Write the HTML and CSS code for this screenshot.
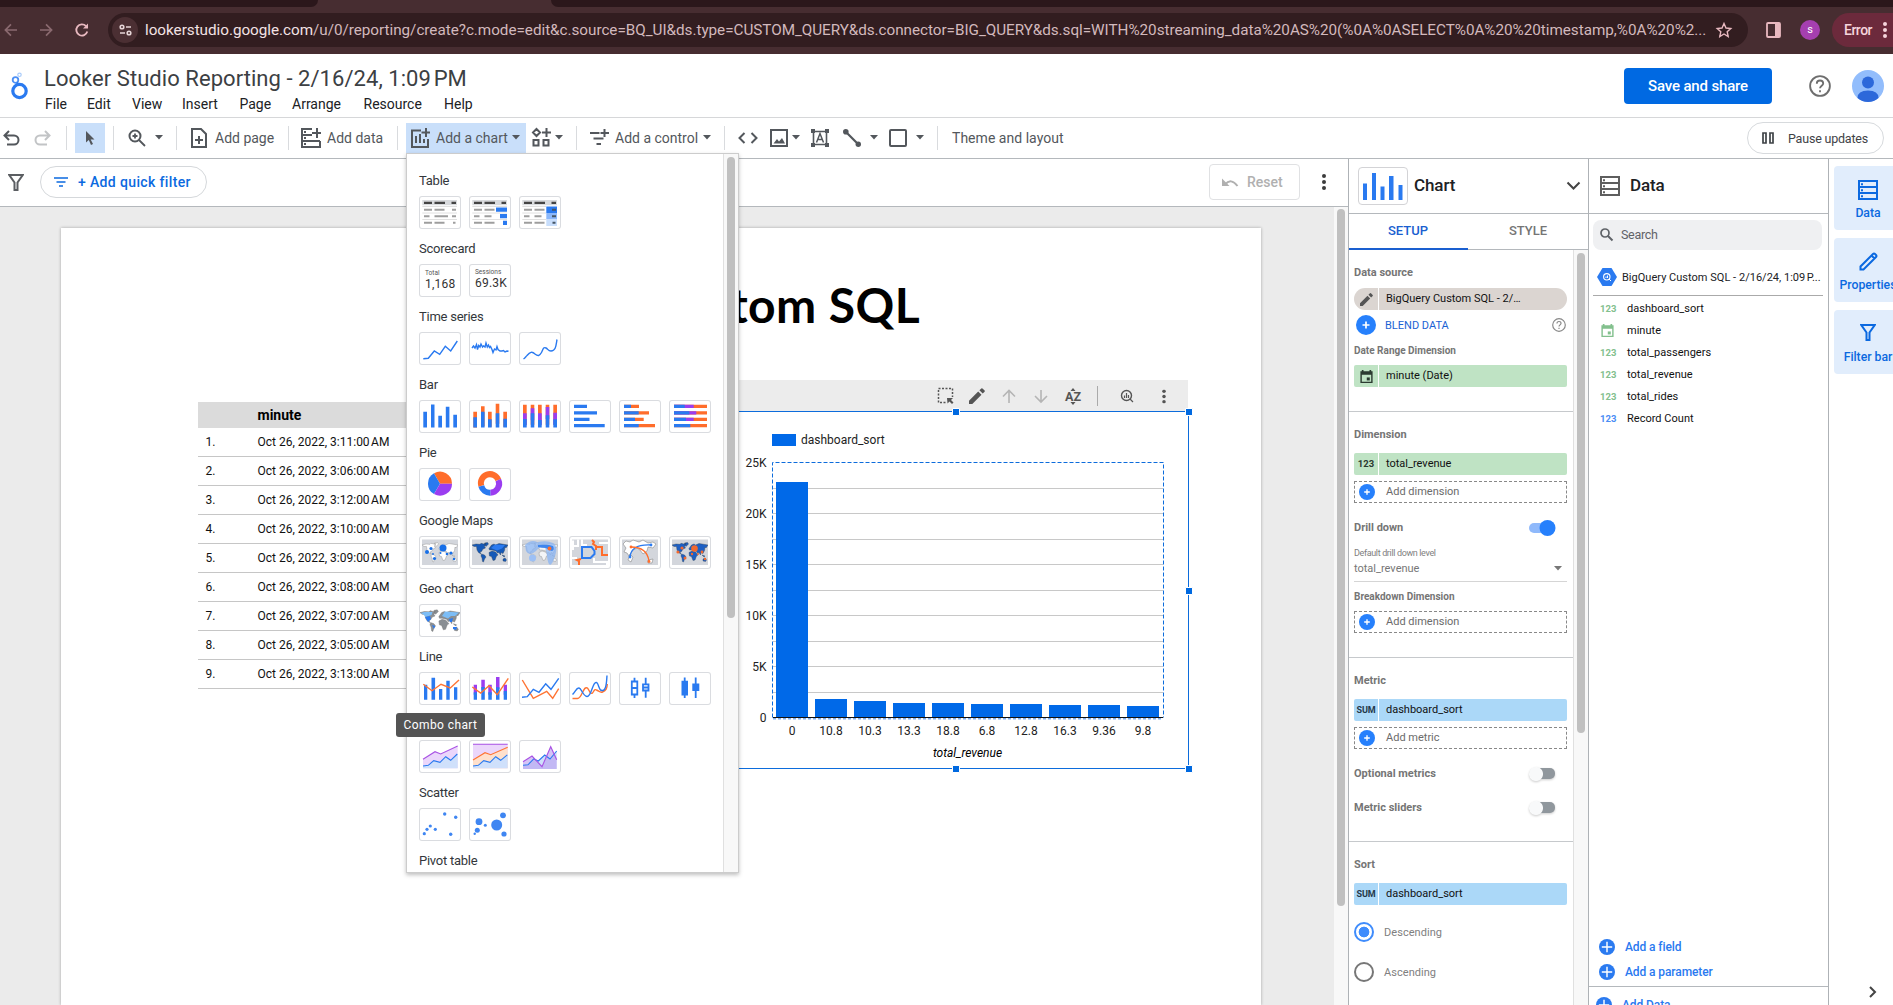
FILE: index.html
```html
<!DOCTYPE html>
<html lang="en">
<head>
<meta charset="utf-8">
<title>Looker Studio Reporting</title>
<link rel="stylesheet" href="styles.css">
</head>
<body>
<svg class="defs" aria-hidden="true">
  <symbol id="world" viewBox="0 0 36 25"><path d="M0 5.5 4 4.5 8 4.8 9 3.8 12 4.5 14 4 12.5 7 13.5 8.5 11 9.5 9.5 12 8 12.5 9 14.5 6.5 13 5 10.5 4.5 7 2 7zM12.5 3.5 15.5 3 16.5 4.5 14 7 13 6zM9.5 14.5 12.5 15.5 14 17.5 12.5 19.5 11.5 22.5 10.5 22 10 18.5 9 16.5zM17 13 20 11.5 23.500 12.500 26 15.5 24.500 16.500 23 20.500 21 21 19.500 17 17.500 16.500zM17.500 10.500 17 9 19.500 5.500 22 4.500 23.500 5.500 27 4 36 5.500 34 8.500 33 7.500 32.500 11 31 14 29 13 28.500 15.500 27 13 25.500 13.500 24 11.500 20 10.500zM30 15.500 33 16.500 32 17.500zM31 19.500 33 18.500 34.500 20.500 33.500 22 31 21.500z"/></symbol>
  <symbol id="plus" viewBox="0 0 20 20"><circle cx="10" cy="10" r="10"/><path d="M10 6.500v7M6.500 10h7" stroke="#fff" stroke-width="1.700"/></symbol>
  <symbol id="bigplus" viewBox="0 0 20 20"><circle cx="10" cy="10" r="10"/><path d="M10 3.500v13M3.500 10h13" stroke="#fff" stroke-width="1.800"/></symbol>
  <symbol id="cal" viewBox="0 0 16 16"><path d="M3 1h1.800v1.500h6.400V1H13v1.500h1.500V15h-13V2.500H3zM3 6v7.500h10V6z" fill-rule="evenodd"/><path d="M8.300 9h3.200v3.200H8.300z"/></symbol>
  <symbol id="pencil" viewBox="0 0 16 16"><path d="M0 12.700V16h3.300l9.200-9.200-3.300-3.300zM15.600 3.700 13.700 5.600 10.400 2.300 12.300.4q.6-.5 1.200 0l2.100 2.100q.5.600 0 1.200z"/></symbol>
  <symbol id="rows" viewBox="0 0 20 20"><path d="M1 1h18v18H1zM1 7h18M1 13h18" fill="none" stroke="currentColor" stroke-width="2"/><path d="M3 3.200h2v2H3zM3 9.200h2v2H3zM3 15.200h2v2H3z"/></symbol>
  <symbol id="caret" viewBox="0 0 8 5"><path d="M0 0h8L4 4.500z"/></symbol>
  <symbol id="help" viewBox="0 0 24 24"><circle cx="12" cy="12" r="10.800" fill="none" stroke="currentColor" stroke-width="2"/><path d="M8.500 9.500q0-3.500 3.500-3.500t3.500 3.200c0 2.300-3.500 2.800-3.500 5.300" fill="none" stroke="currentColor" stroke-width="2"/><path d="M11 16.500h2v2.200h-2z"/></symbol>
  <symbol id="arrow" viewBox="0 0 14 14"><path d="M14 7H1.500M7.500 1 1.500 7l6 6" fill="none" stroke="currentColor" stroke-width="1.800"/></symbol>
  <symbol id="dots" viewBox="0 0 4 16"><circle cx="2" cy="2" r="2"/><circle cx="2" cy="8" r="2"/><circle cx="2" cy="14" r="2"/></symbol>
  <symbol id="funnel" viewBox="0 0 16 17"><path d="M1.300 1h13.400L9.500 8.500V16h-3V8.500z" fill="none" stroke="currentColor" stroke-width="2"/></symbol>
</svg>

<header class="browser">
  <div class="strip"><i class="tab-l"></i><i class="tab-r"></i></div>
  <div class="nav">
    <svg class="nav-back" width="13" height="14"><use href="#arrow"/></svg>
    <svg class="nav-fwd" width="13" height="14"><use href="#arrow"/></svg>
    <svg class="nav-reload" width="14" height="14" viewBox="0 0 14 14"><path d="M12.300 8.500A5.600 5.600 0 1 1 11 3.100" fill="none" stroke="currentColor" stroke-width="1.800"/><path d="M13 .5v5H8z"/></svg>
    <div class="omni">
      <span class="site"><svg width="13" height="12" viewBox="0 0 13 12" fill="none" stroke="currentColor" stroke-width="1.600"><circle cx="3" cy="3" r="1.800"/><path d="M7 3h5M1 9h5"/><circle cx="10" cy="9" r="1.800"/></svg></span>
      <span class="url"><b>lookerstudio.google.com</b>/u/0/reporting/create?c.mode=edit&amp;c.source=BQ_UI&amp;ds.type=CUSTOM_QUERY&amp;ds.connector=BIG_QUERY&amp;ds.sql=WITH%20streaming_data%20AS%20(%0A%0ASELECT%0A%20%20timestamp,%0A%20%2...</span>
      <svg class="star" width="16" height="16" viewBox="0 0 16 16"><path d="M8 1.500 10 6l4.800.5-3.600 3.200 1 4.800L8 12l-4.200 2.500 1-4.800L1.200 6.500 6 6z" fill="none" stroke="currentColor" stroke-width="1.400"/></svg>
    </div>
    <svg class="side" width="15" height="16" viewBox="0 0 15 16"><rect x="1" y="1" width="13" height="14" rx="1" fill="none" stroke="#e9b9c0" stroke-width="1.800"/><path d="M9 1h5v14H9z" fill="#e9b9c0"/></svg>
    <span class="profile">s</span>
    <span class="error">Error<svg width="4" height="16"><use href="#dots"/></svg></span>
  </div>
</header>

<section class="head">
  <svg class="logo" width="18" height="27" viewBox="0 0 18 27" fill="none"><circle cx="8.500" cy="19" r="6.700" stroke="#2a7af0" stroke-width="3.200"/><circle cx="4.500" cy="8" r="2.800" stroke="#4d90f5" stroke-width="1.800"/><circle cx="8.500" cy="2.800" r="1.700" stroke="#a9cbfa" stroke-width="1.200"/><path d="M6 10.500 7.500 13" stroke="#2a7af0" stroke-width="2"/></svg>
  <div class="head-main">
    <h1>Looker Studio Reporting - 2/16/24, 1:09&#8239;PM</h1>
    <nav class="menu"><span>File</span><span>Edit</span><span>View</span><span>Insert</span><span>Page</span><span>Arrange</span><span>Resource</span><span>Help</span></nav>
  </div>
  <button class="save">Save and share</button>
  <svg class="head-help" width="22" height="22"><use href="#help"/></svg>
  <svg class="avatar" width="32" height="32" viewBox="0 0 32 32"><circle cx="16" cy="16" r="16" fill="#92bdfc"/><circle cx="16" cy="12.500" r="6" fill="#2c68da"/><path d="M5.500 28q0-7.500 10.500-7.500T26.500 28a16 16 0 0 1-21 0z" fill="#2c68da"/></svg>
</section>

<section class="tools">
  <div class="seg s1">
    <svg width="17" height="16" viewBox="0 0 17 16"><path d="M1.500 5.500H11a4.500 4.500 0 0 1 0 9H4M6 1 1.500 5.500 6 10" fill="none" stroke="currentColor" stroke-width="2"/></svg>
    <svg class="off" width="17" height="16" viewBox="0 0 17 16"><path d="M15.500 5.500H6a4.500 4.500 0 0 0 0 9h7M11 1l4.500 4.500L11 10" fill="none" stroke="currentColor" stroke-width="2"/></svg>
  </div>
  <div class="seg s2"><span class="sel"><svg width="10" height="14" viewBox="0 0 10 14"><path d="M1 0v11.500l2.800-2.400L6 14l2-1-2.300-4.600H9.500z"/></svg></span></div>
  <div class="seg s3"><svg width="18" height="18" viewBox="0 0 18 18"><circle cx="7" cy="7" r="5.500" fill="none" stroke="currentColor" stroke-width="2"/><path d="m11 11 6 6M7 4.500v5M4.500 7h5" stroke="currentColor" stroke-width="1.800"/></svg><svg class="car" width="8" height="5"><use href="#caret"/></svg></div>
  <div class="seg s4"><svg width="16" height="20" viewBox="0 0 16 20" fill="none" stroke="currentColor" stroke-width="2"><path d="M1 1h9l5 5v13H1zM8 8v8M4 12h8"/></svg><span>Add page</span></div>
  <div class="seg s5"><svg width="20" height="20" viewBox="0 0 20 20"><path d="M11 1H1v18h18v-6M1 7h10M1 13h18M19 13v6" fill="none" stroke="currentColor" stroke-width="2"/><path d="M16 0v10M11 5h9" stroke="currentColor" stroke-width="2"/><path d="M3 3h2v2H3zM3 9h2v2H3zM3 15h2v2H3z"/></svg><span>Add data</span></div>
  <div class="seg s6"><span class="active"><svg width="19" height="20" viewBox="0 0 19 20" fill="none" stroke="currentColor" stroke-width="2"><path d="M10 2.500H1V19h16v-8M5 15V8M9 15V6M13 15v-4M15 0v9M10.500 4.500H19"/></svg><span>Add a chart</span><svg class="car" width="8" height="5"><use href="#caret"/></svg></span><svg class="shapes" width="19" height="19" viewBox="0 0 19 19" fill="none" stroke="currentColor" stroke-width="2"><path d="M4.500 1 8 4.500 4.500 8 1 4.500zM1.500 12h5v5.500h-5zM11.500 12h5v5.500h-5zM14.500 0v9M10 4.500h9"/></svg><svg class="car2" width="8" height="5"><use href="#caret"/></svg></div>
  <div class="seg s7"><svg width="19" height="17" viewBox="0 0 19 17" fill="none" stroke="currentColor" stroke-width="2"><path d="M0 4h9.500M3.500 9.500h10M6.500 15h4.500M14.500 0v8M10.500 4H19"/></svg><span>Add a control</span><svg class="car" width="8" height="5"><use href="#caret"/></svg></div>
  <div class="seg s8">
    <svg class="t-code" width="20" height="12" viewBox="0 0 20 12" fill="none" stroke="currentColor" stroke-width="2"><path d="M6.500 1 1.500 6l5 5M13.500 1l5 5-5 5"/></svg>
    <svg class="t-img" width="18" height="18" viewBox="0 0 18 18"><path d="M1 1h16v16H1z" fill="none" stroke="currentColor" stroke-width="2"/><path d="M3.500 14.500 7 10l2 2.500L12 9l3 5.500z"/></svg><svg class="t-c1" width="8" height="5"><use href="#caret"/></svg>
    <svg class="t-txt" width="18" height="18" viewBox="0 0 18 18"><path d="M2.500 2.500h13v13h-13z" fill="none" stroke="currentColor" stroke-width="1.600"/><path d="M0 0h4v4H0zM14 0h4v4h-4zM0 14h4v4H0zM14 14h4v4h-4z"/><path d="m5.500 13.500 3.500-9 3.500 9M7 10.500h4" fill="none" stroke="currentColor" stroke-width="1.500"/></svg>
    <svg class="t-line" width="18" height="18" viewBox="0 0 18 18"><circle cx="2.800" cy="2.800" r="2.800"/><circle cx="15.300" cy="15.300" r="2.700"/><path d="m3 3 12 12" stroke="currentColor" stroke-width="2.200"/></svg><svg class="t-c2" width="8" height="5"><use href="#caret"/></svg>
    <svg class="t-rect" width="18" height="18" viewBox="0 0 18 18"><rect x="1" y="1" width="16" height="16" rx="1" fill="none" stroke="currentColor" stroke-width="2"/></svg><svg class="t-c2" width="8" height="5"><use href="#caret"/></svg>
  </div>
  <span class="theme">Theme and layout</span>
  <span class="pause"><svg width="12" height="12" viewBox="0 0 12 12" fill="none" stroke="currentColor" stroke-width="1.700"><path d="M1 1h3v10H1zM8 1h3v10H8z"/></svg>Pause updates</span>
</section>

<main class="work">
  <section class="left">
    <div class="filters">
      <svg class="f-fun" width="16" height="17"><use href="#funnel"/></svg>
      <span class="quick"><svg width="14" height="10" viewBox="0 0 14 10"><path d="M0 1h14M2.500 5h9M5 9h4" stroke="currentColor" stroke-width="1.700"/></svg>+ Add quick filter</span>
      <span class="reset"><svg width="17" height="9" viewBox="0 0 17 9"><path d="M3 6.500Q9-.5 15.500 8" fill="none" stroke="currentColor" stroke-width="2"/><path d="M0 .5V8h7.500z"/></svg>Reset</span>
      <svg class="f-dots" width="4" height="16"><use href="#dots"/></svg>
    </div>
    <div class="canvas">
      <article class="page">
        <h2 class="report-title">Custom SQL</h2>
        <table class="data">
          <tr><th></th><th>minute</th></tr>
          <tr><td>1.</td><td>Oct 26, 2022, 3:11:00&#8239;AM</td></tr>
          <tr><td>2.</td><td>Oct 26, 2022, 3:06:00&#8239;AM</td></tr>
          <tr><td>3.</td><td>Oct 26, 2022, 3:12:00&#8239;AM</td></tr>
          <tr><td>4.</td><td>Oct 26, 2022, 3:10:00&#8239;AM</td></tr>
          <tr><td>5.</td><td>Oct 26, 2022, 3:09:00&#8239;AM</td></tr>
          <tr><td>6.</td><td>Oct 26, 2022, 3:08:00&#8239;AM</td></tr>
          <tr><td>7.</td><td>Oct 26, 2022, 3:07:00&#8239;AM</td></tr>
          <tr><td>8.</td><td>Oct 26, 2022, 3:05:00&#8239;AM</td></tr>
          <tr><td>9.</td><td>Oct 26, 2022, 3:13:00&#8239;AM</td></tr>
        </table>
        <div class="chart">
          <svg width="500" height="400" viewBox="700 376 500 400">
            <path d="M700 380h488v31H700z" fill="#ececec"/>
            <g fill="#555">
              <path d="M938.500 388.500h14v14h-14z" fill="none" stroke="#555" stroke-width="1.500" stroke-dasharray="2 1.500"/><path d="M946 397h8v7h-8z" fill="#ececec"/><path d="M947 398h6l-2 2 2.500 2.500-1.500 1.500-2.500-2.500-2 2z"/>
              <use href="#pencil" x="969" y="388" width="16" height="16"/>
              <path d="M1009 403v-12M1003 396.500l6-6 6 6M1041 390v12M1035 396l6 6 6-6" fill="none" stroke="#b5b5b5" stroke-width="1.600"/>
              <text class="az" x="1073" y="401" text-anchor="middle">AZ</text><path d="m1070.500 391 2.500-3 2.500 3zM1070.500 402l2.500 3 2.500-3z"/>
              <path d="M1097 386h1v20h-1z" fill="#aaa"/>
              <circle cx="1126.500" cy="395.500" r="5" fill="none" stroke="#555" stroke-width="1.400"/><path d="m1130 399 3 3M1124.500 398v-2.500M1126.500 398v-5M1128.500 398v-3" stroke="#555" stroke-width="1.200"/>
              <use href="#dots" x="1162" y="389.500" width="4" height="14"/>
            </g>
            <path d="M772 434h24v12h-24z" fill="#0069e8"/>
            <text x="801" y="444.300" class="leg">dashboard_sort</text>
            <path d="M773 488.500h390M773 513.500h390M773 539.500h390M773 564.500h390M773 590.500h390M773 615.500h390M773 641.500h390M773 666.500h390M773 692.500h390" stroke="#c8c8c8"/>
            <path d="M772.500 717.500v-255h391v255" fill="none" stroke="#0c6cdc" stroke-dasharray="4 2"/>
            <path d="M776 482h32v235h-32zM815 699h32v18h-32zM854 701h32v16h-32zM893 703h32v14h-32zM932 703h32v14h-32zM971 704h32v13h-32zM1010 704h32v13h-32zM1049 705h32v12h-32zM1088 705h32v12h-32zM1127 706h32v11h-32z" fill="#0069e8"/>
            <path d="M773 718.500h390" stroke="#7faef0" stroke-width="2" stroke-dasharray="3 2"/><path d="M773 717.500h390" stroke="#111"/>
            <g text-anchor="end"><text x="766.500" y="467">25K</text><text x="766.500" y="518">20K</text><text x="766.500" y="569">15K</text><text x="766.500" y="620">10K</text><text x="766.500" y="671">5K</text><text x="766.500" y="722">0</text></g>
            <g text-anchor="middle"><text x="792" y="735">0</text><text x="831" y="735">10.8</text><text x="870" y="735">10.3</text><text x="909" y="735">13.3</text><text x="948" y="735">18.8</text><text x="987" y="735">6.8</text><text x="1026" y="735">12.8</text><text x="1065" y="735">16.3</text><text x="1104" y="735">9.36</text><text x="1143" y="735">9.8</text><text x="967.500" y="757" font-style="italic">total_revenue</text></g>
            <path d="M700 411.500h488.500v357H700" fill="none" stroke="#0c6cdc"/>
            <path d="M952.500 408.500h7v7h-7zM1185.500 408.500h7v7h-7zM1185.500 587.500h7v7h-7zM1185.500 765.500h7v7h-7zM952.500 765.500h7v7h-7z" fill="#0069e0" stroke="#fff"/>
          </svg>
        </div>
      </article>
      <div class="bar canvas-bar"><i></i></div>
    </div>
  </section>

  <aside class="setup">
    <div class="setup-head">
      <span class="chart-ic"><svg width="50" height="38" viewBox="0 0 50 38"><path d="M5 16.500h4V33H5zM14 6h4v27h-4zM22.500 19.500h4V33h-4zM31 9h4.500v24H31zM40.500 18h4v15h-4z" fill="#2a7af0"/></svg></span>
      <span class="pt">Chart</span>
      <svg class="chev" width="15" height="10" viewBox="0 0 15 10"><path d="m1.500 1.500 6 6 6-6" fill="none" stroke="#444" stroke-width="2"/></svg>
    </div>
    <div class="tabs"><span class="on">SETUP</span><span>STYLE</span></div>
    <div class="setup-body">
      <div class="form">
        <div class="grp g1">
          <h4>Data source</h4>
          <div class="chip src"><i><svg width="13" height="13"><use href="#pencil"/></svg></i><span>BigQuery Custom SQL - 2/…</span></div>
          <div class="blend"><svg width="20" height="20"><use href="#plus"/></svg><span>BLEND DATA</span><svg class="bh" width="14" height="14"><use href="#help"/></svg></div>
          <h4 class="minor">Date Range Dimension</h4>
          <div class="chip green"><i><svg width="15" height="15"><use href="#cal"/></svg></i><span>minute (Date)</span></div>
        </div>
        <div class="grp g2">
          <h4>Dimension</h4>
          <div class="chip green"><i>123</i><span>total_revenue</span></div>
          <div class="add"><svg width="16" height="16"><use href="#plus"/></svg>Add dimension</div>
          <div class="row drill"><h4>Drill down</h4><svg width="28" height="18" viewBox="0 0 28 18"><rect x="1" y="4" width="22" height="10" rx="5" fill="#8fb9fb"/><circle cx="19.500" cy="9" r="8" fill="#2680fc"/></svg></div>
          <small>Default drill down level</small>
          <div class="select">total_revenue<svg width="8" height="5"><use href="#caret"/></svg></div>
          <h4 class="brk minor">Breakdown Dimension</h4>
          <div class="add"><svg width="16" height="16"><use href="#plus"/></svg>Add dimension</div>
        </div>
        <div class="grp g3">
          <h4>Metric</h4>
          <div class="chip blue"><i>SUM</i><span>dashboard_sort</span></div>
          <div class="add"><svg width="16" height="16"><use href="#plus"/></svg>Add metric</div>
          <div class="row opt"><h4>Optional metrics</h4><i class="tog"></i></div>
          <div class="row opt"><h4>Metric sliders</h4><i class="tog"></i></div>
        </div>
        <div class="grp g4">
          <h4>Sort</h4>
          <div class="chip blue"><i>SUM</i><span>dashboard_sort</span></div>
          <div class="radio on"><i></i>Descending</div>
          <div class="radio"><i></i>Ascending</div>
        </div>
      </div>
      <div class="bar setup-bar"><i></i></div>
    </div>
  </aside>

  <aside class="fields">
    <div class="fields-head"><svg width="20" height="20"><use href="#rows"/></svg><span class="pt">Data</span></div>
    <div class="search"><svg width="13" height="13" viewBox="0 0 13 13"><circle cx="5" cy="5" r="4" fill="none" stroke="currentColor" stroke-width="1.700"/><path d="m8 8 4.500 4.500" stroke="currentColor" stroke-width="1.900"/></svg>Search</div>
    <div class="source"><svg width="20" height="18" viewBox="0 0 20 18"><path d="M5.500 0h9L20 9l-5.500 9h-9L0 9z" fill="#2a7af0"/><circle cx="9.800" cy="8.800" r="3.200" fill="none" stroke="#fff" stroke-width="1.100"/><path d="m12 11 2 2M9 10V8.500M10.500 10V7.500" stroke="#fff"/></svg><span>BigQuery Custom SQL - 2/16/24, 1:09&#8239;P...</span></div>
    <ul>
      <li><i>123</i>dashboard_sort</li>
      <li><i><svg width="15" height="15"><use href="#cal"/></svg></i>minute</li>
      <li><i>123</i>total_passengers</li>
      <li><i>123</i>total_revenue</li>
      <li><i>123</i>total_rides</li>
      <li class="b"><i>123</i>Record Count</li>
    </ul>
    <div class="adds"><p><svg width="16" height="16"><use href="#bigplus"/></svg>Add a field</p><p><svg width="16" height="16"><use href="#bigplus"/></svg>Add a parameter</p></div>
    <div class="add-data"><svg width="16" height="16"><use href="#bigplus"/></svg>Add Data</div>
  </aside>

  <aside class="rail">
    <span><svg width="20" height="20"><use href="#rows"/></svg>Data</span>
    <span><svg width="19" height="19" viewBox="0 0 19 19"><path d="M1.500 17.500v-3L14 2q1-1 2 0l1 1q1 1 0 2L4.500 17.500zM12.500 3.500l3 3" fill="none" stroke="currentColor" stroke-width="2"/></svg>Properties</span>
    <span><svg width="16" height="17"><use href="#funnel"/></svg>Filter bar</span>
    <svg class="collapse" width="8" height="12" viewBox="0 0 8 12"><path d="m1 1 5 5-5 5" fill="none" stroke="#444" stroke-width="2"/></svg>
  </aside>
</main>

<div class="picker">
  <div class="list">
    <h5>Table</h5>
    <div class="cards">
      <svg viewBox="0 0 42 33"><path d="M3.300 4H38v5.300H3.300z" fill="#d8dadd"/><path d="M5 6.800h8M15.500 6.800H26M32.500 6.800H37" stroke="#444" stroke-width="2.200"/><path d="M3.300 10.500H38M3.300 17H38M3.300 23.500H38" stroke="#e0e0e0"/><path d="M5 13.800h8M15.500 13.800h10M33 13.800h4M5 20.200h5.500M15.500 20.200H29M33 20.200h4M5 26.700h8M15.500 26.700h10M34 26.700h2.500" stroke="#9e9e9e" stroke-width="1.900"/></svg>
      <svg viewBox="0 0 42 33"><path d="M3.300 4H38v5.300H3.300z" fill="#d8dadd"/><path d="M5 6.800h8M15.500 6.800H26M32.500 6.800H37" stroke="#444" stroke-width="2.200"/><path d="M3.300 10.500H38M3.300 17H38M3.300 23.500H38" stroke="#e0e0e0"/><path d="M5 13.800h8M15.500 13.800h10M5 20.200h5.500M15.500 20.200h7M5 26.700h8M15.500 26.700h10" stroke="#9e9e9e" stroke-width="1.900"/><path d="M27 11.500h11v4.300H27zM31 18h7v4.300h-7zM34 24.700h4V29h-4z" fill="#2a7af0"/></svg>
      <svg viewBox="0 0 42 33"><path d="M3.300 4H38v5.300H3.300z" fill="#d8dadd"/><path d="M5 6.800h8M15.500 6.800H26M32.500 6.800H37" stroke="#444" stroke-width="2.200"/><path d="M3.300 10.500H27M3.300 17H27M3.300 23.500H27" stroke="#e0e0e0"/><path d="M5 13.800h8M15.500 13.800h10M5 20.200h5.500M15.500 20.200h7M5 26.700h8M15.500 26.700h10" stroke="#9e9e9e" stroke-width="1.900"/><path d="M27.300 10.500H38V17H27.300z" fill="#2a7af0"/><path d="M27.300 17H38v6.500H27.300z" fill="#8cb8fa"/><path d="M27.300 23.500H38V30H27.300z" fill="#c8defc"/><path d="M33 13.800h4M33 20.200h4M33.500 26.700h3" stroke="#456" stroke-width="1.900"/></svg>
    </div>
    <h5>Scorecard</h5>
    <div class="cards">
      <div class="score">Total<b>1,168</b></div><div class="score s2nd">Sessions<b>69.3K</b></div>
    </div>
    <h5>Time series</h5>
    <div class="cards ln">
      <svg viewBox="0 0 42 33"><path d="m4.300 26.700 5-.4 6-7.300 5.400 3.300 5.600-8 5.400 4.700L38.300 9"/></svg>
      <svg viewBox="0 0 42 33"><path d="m3 16 1.500-2 1.500 2 1.500-3.500 1 5 1.200-4 1.300 1.500L12 12l1.500 3 1-1 1.500 1 1-4 1.300 4 1.200-2 1 2.500 1-1 1.500 3 1 3 1.500-3.500 1.500 1 1-3.500 1 3 2 1.500 2 0 1.500-.5 1.500 1.500 2-1 1.500.3"/></svg>
      <svg viewBox="0 0 42 33"><path d="M4.500 27C6 26 6.500 25 8 23.500c3-3.500 5-4.500 8-1.500 3 2.500 4.500 2 6.500-1.500 1.500-2.500 1.500-6 4.500-4.500 2 1 2 3 5 3 5 0 5-6 6-11.500"/></svg>
    </div>
    <h5>Bar</h5>
    <div class="cards">
      <svg viewBox="0 0 42 33"><path d="M4.300 11.700H8v15.800H4.300zM12 4.500h3.500v23H12zM19.300 15.800H23v11.700h-3.700zM26.800 6.800h3.600v20.700h-3.600zM34.300 14.800H38v12.700h-3.700z" fill="#2a7af0"/></svg>
      <svg viewBox="0 0 42 33"><path d="M4.300 11.700H8v15.800H4.300zM12 6.300h3.600v20H12zM19 11.700h3.700v15H19zM26.700 3.700h3.600v20h-3.600zM34.300 11.700H38v15h-3.700z" fill="#ff6d2b"/><path d="M4.300 17.300H8v10.200H4.300zM12 11.700h3.600v15.800H12zM19 19.300h3.700v8.200H19zM26.700 13.300h3.600v14.200h-3.600zM34.300 18.700H38v8.800h-3.700z" fill="#2a7af0"/></svg>
      <svg viewBox="0 0 42 33"><path d="M4 4.700h3.700v20H4zM11.700 4.700h3.600v20h-3.600zM19 4.700h3.700v20H19zM26.700 4.700h3.600v20h-3.600zM34.300 4.700H38v20h-3.700z" fill="#ff6d2b"/><path d="M4 13.300h3.700v12H4zM11.700 8.300h3.600v12h-3.600zM19 13.300h3.700v12H19zM26.700 7h3.600v12h-3.600zM34.300 12.700H38v12h-3.700z" fill="#9b3df0"/><path d="M4 19h3.700v8.500H4zM11.700 13.300h3.600v14.200h-3.600zM19 20h3.700v7.500H19zM26.700 15.300h3.600v12.200h-3.600zM34.300 19.300H38v8.200h-3.700z" fill="#2a7af0"/></svg>
      <svg viewBox="0 0 42 33"><path d="M5 4.700h13V8H5zM5 11.200h23v3.300H5zM5 17.700h15.500V21H5zM5 24h30.700v3.300H5z" fill="#2a7af0"/></svg>
      <svg viewBox="0 0 42 33"><path d="M5 4.700h15V8H5zM5 11.200h25v3.300H5zM5 17.700h19.700V21H5zM5 24h31v3.300H5z" fill="#ff6d2b"/><path d="M5 4.700h7V8H5zM5 11.200h14.700v3.300H5zM5 17.700h11V21H5zM5 24h14.700v3.300H5z" fill="#2a7af0"/></svg>
      <svg viewBox="0 0 42 33"><path d="M5 4.700h33V8H5zM5 11.200h33v3.300H5zM5 17.700h33V21H5zM5 24h33v3.300H5z" fill="#ff6d2b"/><path d="M5 4.700h19.700V8H5zM5 11.200h22.300v3.300H5zM5 17.700h19.700V21H5z" fill="#9b3df0"/><path d="M5 4.700h10.700V8H5zM5 11.200h15.300v3.300H5zM5 17.700h12V21H5zM5 24h16.300v3.300H5z" fill="#2a7af0"/></svg>
    </div>
    <h5>Pie</h5>
    <div class="cards">
      <svg viewBox="0 0 42 33"><path d="M21 15.700h12A12 12 0 0 0 15 5.300z" fill="#ff6d2b"/><path d="M21 15.700 15 5.300a12 12 0 0 0 0 20.800z" fill="#2a7af0"/><path d="M21 15.700 15 26.100a12 12 0 0 0 18-10.400z" fill="#9b3df0"/></svg>
      <svg viewBox="0 0 42 33" fill="none" stroke-width="6"><path d="M12.300 17.900A9 9 0 0 1 29.300 12" stroke="#ff6d2b"/><path d="M29.300 12A9 9 0 0 1 21.300 24.700" stroke="#9b3df0"/><path d="M21.300 24.700a9 9 0 0 1-9-6.800" stroke="#2a7af0"/></svg>
    </div>
    <h5>Google Maps</h5>
    <div class="cards maps">
      <svg viewBox="0 0 42 33"><path class="bg" d="M3 3.500h36V29H3z"/><use href="#world" x="3" y="3.500" width="36" height="25" fill="#fff" stroke="#888" stroke-width=".4"/><g fill="#176fe8"><circle cx="24" cy="12" r="3.500"/><circle cx="12" cy="12.500" r="1.600"/><circle cx="8" cy="16" r="2"/><circle cx="15.500" cy="22.500" r="1.600"/><circle cx="32" cy="17" r="1.600"/><circle cx="28" cy="18" r="1.300"/><circle cx="21.500" cy="17" r="1"/><circle cx="35" cy="23" r="1.200"/><circle cx="14" cy="18" r=".9"/></g></svg>
      <svg viewBox="0 0 42 33"><path class="bg" d="M3 3.500h36V29H3z"/><use href="#world" x="3" y="3.500" width="36" height="25" fill="#1559b8" stroke="#345" stroke-width=".4"/><path d="m22 12 4-3.500 10 .5-3 3.500-5 2z" fill="#2a7af0"/></svg>
      <svg viewBox="0 0 42 33"><path class="bg" d="M3 3.500h36V29H3z"/><use href="#world" x="3" y="3.500" width="36" height="25" fill="#f4f5f7" stroke="#888" stroke-width=".4"/><path d="M6 9q6-6 12-3t-1 9-10 0zM19 6q9-2 15 1t1 16-7-3-9-7z" fill="#8ab4f3" opacity=".75"/><circle cx="13.500" cy="22" r="3.500" fill="#9dc0f5"/><path d="M19 9q10-1 15 1 2 4-1 5-3 0-6-3-5 0-8-1z" fill="#3f86ee"/><circle cx="30.500" cy="12.500" r="1.900" fill="#ff6d2b"/></svg>
      <svg viewBox="0 0 42 33"><path class="bg" d="M3 3.500h36V29H3z"/><path d="M4 14v-9.500M3 10h6V3.500M13 3.500V9h5M3 22h5M25 22v4h13v3M30 7h9" fill="none" stroke="#fff" stroke-width="2"/><path d="M13 11h9.500l3 4v3l-4 4H13z" fill="none" stroke="#2a7af0" stroke-width="2"/><path d="m23 4 2 2-1 2 3 2 0 4M26 11h7v8h6M10 29l0-4-2-1 4-1" fill="none" stroke="#ff6d2b" stroke-width="2"/></svg>
      <svg viewBox="0 0 42 33"><path class="bg" d="M3 3.500h36V29H3z"/><path d="m4 8 3-3 4 1 3-2 6 2 4-2 5 3 5-1 3 2-3 4-5-1-1 4-4 3-3-4-3-2-4 2-4 6-2-3-3-1 2-4z" fill="#fff" stroke="#888" stroke-width=".6"/><path d="m11 18 3 3-2 5-3-2zM29 24l5-1-1 4-4 0z" fill="#fff" stroke="#888" stroke-width=".6"/><path d="M11 21q1-13 21-12" fill="none" stroke="#2a7af0" stroke-width="1.300"/><path d="M12 11q16 0 18 14" fill="none" stroke="#ff6d2b" stroke-width="1.300"/><circle cx="32" cy="9" r="1.400" fill="#2a7af0"/><circle cx="11" cy="21" r="1.400" fill="#2a7af0"/><circle cx="30" cy="25.500" r="1.400" fill="#ff6d2b"/><circle cx="12" cy="11" r="1.400" fill="#ff6d2b"/></svg>
      <svg viewBox="0 0 42 33"><path class="bg" d="M3 3.500h36V29H3z"/><use href="#world" x="3" y="3.500" width="36" height="25" fill="#1d5fc4" stroke="#345" stroke-width=".4"/><g fill="#f2692e"><circle cx="25.500" cy="12.500" r="3.300"/><circle cx="13" cy="12" r="1.600"/><circle cx="9" cy="16" r="1.600"/><circle cx="16" cy="22" r="1.500"/><circle cx="23" cy="18" r="1.200"/><circle cx="33" cy="16" r="1.400"/><circle cx="29" cy="18" r="1"/><circle cx="36" cy="23" r="1.200"/></g></svg>
    </div>
    <h5>Geo chart</h5>
    <div class="cards"><svg viewBox="0 0 42 33"><use href="#world" x="1" y="2.500" width="40" height="27.800" fill="#8a8f94" stroke="#777" stroke-width=".4"/><path d="m1.500 9 4-1 8 0-1 3-6 2-2-2.500zM23 12l3-4.500 14 1-4 3.500-4 0-3 2.500z" fill="#7cbdf6"/><path d="m6 13 5-1 1 3-3 3zM13 21l3 1-1 3zM30 15l4-1-1 4-2 0zM34 23l4 0-1 3-3-1z" fill="#2a7af0"/></svg></div>
    <h5>Line</h5>
    <div class="cards ln">
      <svg viewBox="0 0 42 33"><path class="fb" d="M5 12.700h3.300v15H5zM12.500 5.700h3.600v22h-3.600zM20 17h3.300v10.700H20zM27.300 8.700h3.400v19h-3.400zM35 15.300h3.300v12.400H35z"/><path class="o" d="m4.300 12.300 8.700 6.400 9-6.400 9.300 3.700L40 8"/></svg>
      <svg viewBox="0 0 42 33"><path class="fp" d="M4.700 12.700H8v10H4.700zM12.300 7.700h3.500v10h-3.500zM19.300 12.700h3.500v10h-3.500zM27 5h3.500v12H27zM34.700 12.700H38v10h-3.300z"/><path class="fb" d="M4.700 20.300H8v7.400H4.700zM12.300 15h3.500v12.700h-3.500zM19.300 20.300h3.500v7.400h-3.500zM27 15.300h3.500v12.400H27zM34.700 19H38v8.700h-3.300z"/><path class="o" d="m3.300 15 8.400 6 8.300-7.300 8.300 9L39.300 6.300"/></svg>
      <svg viewBox="0 0 42 33"><path class="o" d="m3.300 8 11 18.300 13.400-7 6 7 6-9.600"/><path d="m3 25.300 5.300-.6 6-7.400 5.700 3 6.700-8.600 5.300 5.600 7.700-11"/></svg>
      <svg viewBox="0 0 42 33"><path class="o" d="M3.500 26.500h5c4 0 5-9 8-10.500s3 3 5 5c3 2 3-5 6-3 3 1.500 4 3 6 2 4-1.500 4.500-4 4.800-8"/><path d="M3.500 22.500c3-3 4-7 6.500-6.500s4 8 8 8.500 5-11 8-13.500 3.500 5 5.500 7c6 3 6-8 6.500-14.500"/></svg>
      <svg class="candle" viewBox="0 0 42 33"><path d="M12.800 9.500h5.500v13h-5.500zM12.800 16h5.500M15.500 5.700v4M15.500 22.500V26M24 12.300h5.500v6.200H24zM24 15.500h5.500M26.700 5.700v6.600M26.700 18.500v7.300"/></svg>
      <svg class="candle" viewBox="0 0 42 33"><path class="fb" d="M12.500 8.700H19v14.800h-6.500zM23.300 11.500h7V19h-7z"/><path d="M15.700 5.500V26M26.700 5.500V26"/></svg>
    </div>
    <h5>&nbsp;</h5>
    <div class="cards ln thin">
      <svg viewBox="0 0 42 33"><path class="lilac" d="m4 19.300 12-7.600 5.700 2.300L38.700 6v22.300H4z"/><path class="sky" d="m4 26 5.300-.7 5.400-4.600 6.300 1.600 5.700-5.600 5 3.600 7-6.300v14.300H4z"/><path class="p" d="m4 19.300 12-7.600 5.700 2.300L38.700 6"/><path d="m4 26 5.300-.7 5.400-4.600 6.300 1.600 5.700-5.600 5 3.600 6.600-6.300"/></svg>
      <svg viewBox="0 0 42 33"><path class="lilac" d="M4 4h34.700v24.300H4z"/><path class="peach" d="m4 20 12-7.300 5.700 2L38.700 7.300v21H4z"/><path class="sky" d="m4 26 5.300-.7 5.400-4.600 6.300 1.600 5.700-5.600 5 3.600 7-6.300v14.300H4z"/><path class="p" d="M4 4.300h34.700"/><path class="o" d="m4 20 12-7.300 5.700 2L38.700 7.300"/><path d="m4 26 5.300-.7 5.400-4.600 6.300 1.600 5.700-5.600 5 3.600 6.600-5.500"/></svg>
      <svg viewBox="0 0 42 33"><path class="sky" d="m4 25.300 5-.5 5.700-6 4.600 2.200 6.400-6 5.300 4 6.700-8v18H4z"/><path class="violet" d="m4 21.700 9-5.700 10 10.700L31.700 6.700l6 13v9.300H4z"/><path d="m4 25.300 5-.5 5.700-6 4.600 2.200 6.400-6 5.300 4 6.700-8"/><path class="p" d="m4 21.700 9-5.700 10 10.700L31.700 6.700l6 13"/></svg>
    </div>
    <h5>Scatter</h5>
    <div class="cards dotted">
      <svg viewBox="0 0 42 33"><circle cx="5.300" cy="25.700" r="1.600"/><circle cx="8" cy="21.300" r="1.600"/><circle cx="11.300" cy="18" r="1.600"/><circle cx="16.300" cy="21.300" r="1.600"/><circle cx="25.700" cy="6" r="1.700"/><circle cx="36.700" cy="9.300" r="1.700"/><circle cx="31.700" cy="26.300" r="1.700"/></svg>
      <svg viewBox="0 0 42 33"><circle cx="5.700" cy="25.700" r="1.200"/><circle cx="8.300" cy="22.300" r="2.500"/><circle cx="10" cy="13.700" r="3.400"/><circle cx="16.300" cy="17.300" r="1.500"/><circle cx="27.700" cy="17" r="5.500"/><circle cx="34" cy="7.300" r="2.900"/><circle cx="35" cy="26" r="2.600"/></svg>
    </div>
    <h5>Pivot table</h5>
  </div>
  <div class="bar picker-bar"><i></i></div>
</div>
<div class="tip">Combo chart</div>
</body>
</html>
```
FILE: styles.css
```css
* { box-sizing: border-box; }
body { margin: 0; width: 1893px; height: 1005px; overflow: hidden; display: flex; flex-direction: column; position: relative; font-family: Roboto, "Liberation Sans", sans-serif; font-size: 12px; color: #202124; background: #fff; }
svg { display: block; flex: none; fill: currentColor; overflow: visible; }
svg[fill="none"] { fill: none; }
.defs { position: absolute; width: 0; height: 0; }
h1, h2, h4, h5, p, ul { margin: 0; padding: 0; font-weight: 400; }
i { font-style: normal; }

/* browser frame */
.browser { height: 54px; flex: none; background: #472d31; }
.strip { height: 7px; display: flex; justify-content: space-between; }
.tab-l { width: 318px; background: #2b171b; border-bottom-right-radius: 7px; }
.tab-r { width: 1342px; background: #2b171b; border-bottom-left-radius: 7px; }
.nav { height: 47px; display: flex; align-items: center; color: #e9b9c0; padding-bottom: 1px; }
.nav > * { flex: none; }
.nav-back { margin-left: 4px; color: #8b6a70; }
.nav-fwd { margin-left: 23px; color: #8b6a70; transform: scaleX(-1); }
.nav-reload { margin-left: 22px; }
.omni { margin-left: 19px; width: 1640px; height: 34px; border-radius: 17px; background: #321d20; display: flex; align-items: center; padding-left: 4px; }
.site { width: 26px; height: 26px; flex: none; border-radius: 50%; background: #4b2f33; display: flex; align-items: center; justify-content: center; color: #e6d5d7; }
.url { margin-left: 7px; width: 1562px; flex: none; font-size: 15.250px; letter-spacing: -.026px; color: #d2b9bd; white-space: nowrap; }
.url b { font-weight: 400; color: #f3e2e4; }
.star { margin-left: 9px; }
.side { margin-left: 18px; }
.profile { margin-left: 19px; width: 20px; height: 20px; border-radius: 50%; background: #a53fb0; color: #fff; font-size: 11px; line-height: 19px; text-align: center; }
.error { margin-left: 12px; width: 80px; height: 34px; border-radius: 17px; background: #6c2a3c; color: #f6d5dc; display: flex; align-items: center; padding-left: 12px; font-size: 14px; font-weight: 500; letter-spacing: -.5px; }
.error svg { margin-left: 11px; }

/* report header */
.head { height: 64px; flex: none; display: flex; align-items: center; border-bottom: 1px solid #d6d7d9; }
.logo { margin: 0 0 0 11px; }
.head-main { margin-left: 15px; width: 1580px; padding-top: 8px; }
.head h1 { font-size: 22px; line-height: 28px; color: #3c4043; letter-spacing: .05px; }
.menu { display: grid; grid-template-columns: 42px 45px 50px 57.500px 52.500px 71.500px 80.500px 60px; line-height: 18px; font-size: 14px; margin: 2px 0 2px 1px; }
.save { width: 148px; height: 36px; flex: none; border: 0; border-radius: 4px; background: #0069e2; color: #fff; font: 500 15px Roboto, sans-serif; letter-spacing: -.15px; padding: 0; }
.head-help { margin-left: 37px; color: #6e6e6e; }
.avatar { margin-left: 21px; }

/* toolbar */
.tools { height: 41px; flex: none; display: flex; align-items: center; border-bottom: 1px solid #b4b8bc; color: #53575c; font-size: 14px; padding-bottom: 1px; }
.seg { height: 24px; display: flex; align-items: center; border-right: 1px solid #d9dbde; white-space: nowrap; }
.s1 { width: 67px; padding-left: 3px; gap: 14px; }
.off { color: #c2c4c6; }
.s2 { width: 47px; padding-left: 8px; }
.sel { width: 30px; height: 30px; background: #c9dffa; display: flex; align-items: center; justify-content: center; }
.s3 { width: 63px; padding-left: 14px; gap: 9px; }
.s4 { width: 112px; padding-left: 14px; gap: 8px; }
.s5 { width: 109px; padding-left: 12px; gap: 6px; }
.s6 { width: 179px; padding-left: 8px; }
.active { width: 120px; height: 30px; background: #c9dffa; display: flex; align-items: center; padding-left: 5px; gap: 6px; }
.active .car { margin-left: -2px; }
.shapes { margin-left: 6px; }
.car2 { margin-left: 4px; }
.s7 { width: 148px; padding-left: 13px; gap: 6px; }
.s7 .car { margin-left: -1px; }
.s8 { width: 213px; padding-left: 13px; }
.t-img { margin-left: 12px; }
.t-c1 { margin-left: 4px; }
.t-txt { margin-left: 11px; }
.t-line { margin-left: 14px; }
.t-c2 { margin-left: 9px; }
.t-rect { margin-left: 11px; }
.theme { margin-left: 14px; letter-spacing: .03px; }
.pause { margin: 1px 9px 0 auto; width: 137px; height: 32px; border: 1px solid #d7dadd; border-radius: 16px; display: flex; align-items: center; padding-left: 14px; gap: 14px; font-size: 12.500px; letter-spacing: -.2px; color: #3f4347; white-space: nowrap; }

/* work area */
.work { flex: 1; min-height: 0; display: flex; }
.left { width: 1348px; flex: none; display: flex; flex-direction: column; }
.filters { height: 48px; flex: none; border-bottom: 1px solid #b4b8bc; display: flex; align-items: center; color: #5b5e62; padding-bottom: 1px; }
.f-fun { margin-left: 8px; }
.quick { margin-left: 16px; width: 167px; height: 32px; border: 1px solid #d5d8db; border-radius: 16px; display: flex; align-items: center; padding-left: 13px; gap: 10px; color: #0b6ae0; font-size: 14px; letter-spacing: .36px; font-weight: 500; white-space: nowrap; }
.reset { margin-left: auto; width: 91px; height: 36px; border: 1px solid #e0e1e3; border-radius: 4px; display: flex; align-items: center; padding-left: 12px; gap: 8px; color: #b0b0b0; font-size: 14px; font-weight: 500; }
.f-dots { margin: 0 22px 0 22px; color: #3c3c3c; }
.canvas { flex: 1; min-height: 0; background: #ebebeb; display: flex; justify-content: space-between; overflow: hidden; }
.page { margin: 21px 0 0 61px; width: 1200px; background: #fff; box-shadow: 0 0 3px rgba(0,0,0,.3); position: relative; }
.report-title { position: absolute; right: 341px; top: 47px; font: 700 48px/60px Lato, sans-serif; letter-spacing: .4px; color: #000; white-space: nowrap; }
.data { position: absolute; left: 137px; top: 174px; width: 400px; border-collapse: separate; border-spacing: 0; font-size: 12px; color: #111; table-layout: fixed; }
.data th { height: 26px; background: #dbdbdb; text-align: left; font-size: 14px; font-weight: 700; color: #000; padding: 0; }
.data td { height: 29px; border-bottom: 1px solid #c6c6c6; padding: 0; }
.data tr > :first-child { width: 59.500px; padding-left: 7.500px; }
.chart { position: absolute; left: 639px; top: 148px; }
.chart text { font: 12px Roboto, sans-serif; fill: #222; }
.chart text[font-style] { font-style: italic; fill: #000; }
.chart .az { font-weight: 700; font-size: 12.500px; fill: #555; }
.bar { background: #f8f8f8; flex: none; padding-top: 2px; }
.bar i { display: block; width: 8px; border-radius: 4px; background: #c0c0c0; }
.canvas-bar { width: 14px; padding-left: 3px; }
.canvas-bar i { height: 697px; }

/* chart setup */
.setup { width: 240px; flex: none; border-left: 1px solid #aeb2b6; display: flex; flex-direction: column; overflow: hidden; font-size: 11px; }
.setup-head, .fields-head { height: 55px; flex: none; border-bottom: 1px solid #b4b8bc; display: flex; align-items: center; }
.chart-ic { margin-left: 9px; border: 1px solid #d3d3d6; border-radius: 4px; width: 50px; height: 38px; }
.chart-ic svg { margin: -1px; }
.pt { font-size: 17px; font-weight: 500; color: #202124; letter-spacing: -.1px; padding-bottom: 2px; }
.setup-head .pt { margin-left: 6px; }
.chev { margin-left: auto; margin-right: 7px; }
.tabs { height: 36px; flex: none; border-bottom: 1px solid #b4b8bc; display: grid; grid-template-columns: 119px 120px; text-align: center; line-height: 34px; font-size: 13px; font-weight: 500; color: #757575; }
.tabs .on { color: #1a5fd0; border-bottom: 2px solid #1a5fd0; height: 36px; padding-right: 1px; }
.setup-body { flex: 1; min-height: 0; display: flex; }
.form { width: 224px; flex: none; }
.grp { border-bottom: 1px solid #c6c9cc; padding: 0 6px 0 5px; }
.grp h4, .row h4 { font-size: 11px; line-height: 14px; font-weight: 700; color: #757575; }
.grp .minor { font-size: 10px; }
.g1 { height: 162px; padding-top: 16px; }
.chip { height: 22px; border-radius: 2px; display: flex; margin-top: 9px; line-height: 22px; color: #111; }
.chip i { width: 25px; border-right: 1px solid #fff; display: flex; align-items: center; justify-content: center; font-size: 9.500px; font-weight: 700; color: #2b3a30; }
.chip span { padding-left: 7px; }
.src { background: #dbd5d1; border-radius: 11px; margin-top: 8px; line-height: 21px; }
.src i { color: #555; }
.green { background: #bfe3c4; margin-top: 7px; }
.blue { background: #abd8f8; }
.blue i { font-size: 9px; letter-spacing: -.2px; color: #24384a; }
.blend { display: flex; align-items: center; height: 20px; margin: 5px 0 9px; padding-left: 2px; color: #1a62d4; }
.blend span { margin-left: 9px; }
.blend svg:first-child, .add svg { color: #2680fc; }
.bh { margin-left: auto; margin-right: 1px; color: #888; }
.g2 { height: 246px; padding-top: 16px; }
.g2 .green { margin-top: 11px; }
.add { height: 22px; margin-top: 6px; border: 1px dashed #888; display: flex; align-items: center; color: #6b6b6b; padding-left: 4px; gap: 11px; line-height: 18px; }
.row { display: flex; align-items: center; justify-content: space-between; }
.drill { height: 18px; margin-top: 16px; padding-right: 11px; }
.grp small { display: block; font-size: 9px; line-height: 12px; margin-top: 10px; color: #808080; letter-spacing: -.36px; }
.select { height: 23px; border-bottom: 1px solid #d5d5d5; display: flex; align-items: center; justify-content: space-between; padding: 0 5px 3px 0; color: #777; }
.brk { padding-top: 8px; }
.g2 .brk + .add { margin-top: 7px; }
.g3 { height: 184px; padding-top: 16px; }
.g3 .chip, .g4 .chip { margin-top: 11px; }
.opt { height: 34px; padding-right: 12px; }
.add + .opt { margin-top: 8px; }
.tog { width: 26px; height: 15px; border-radius: 7px; background: radial-gradient(circle at 7px 7px, #f8f9fa 6.500px, transparent 7.500px), linear-gradient(#90979d, #90979d) 7px 1.500px / 13px 11px no-repeat; position: relative; filter: drop-shadow(0 1px 1px rgba(0,0,0,.2)); }
.tog::after { content: ""; position: absolute; right: 0; top: 1.500px; width: 10px; height: 11px; border-radius: 0 5px 5px 0; background: #90979d; }
.g4 { padding-top: 16px; border: 0; }
.radio { height: 40px; display: flex; align-items: center; gap: 10px; color: #808080; letter-spacing: .05px; }
.chip + .radio { margin-top: 7px; }
.radio i { width: 20px; height: 20px; border: 2px solid #777; border-radius: 50%; }
.radio.on i { border-color: #3f8cfc; background: radial-gradient(circle, #3f8cfc 5px, #fff 5.700px); }
.setup-bar { width: 15px; border-left: 1px solid #e0e0e0; padding-left: 3px; padding-top: 3px; }
.setup-bar i { height: 480px; }

/* data fields */
.fields { width: 240px; flex: none; border-left: 1px solid #aeb2b6; display: flex; flex-direction: column; font-size: 11px; }
.fields-head { padding-left: 11px; gap: 10px; color: #5e5e5e; }
.search { margin: 6px 6px 0 4px; height: 30px; border-radius: 8px; background: #eff0f2; display: flex; align-items: center; padding: 0 0 1px 7px; gap: 8px; font-size: 12.500px; letter-spacing: -.3px; color: #5f6368; }
.source { margin: 0 5px 0 4px; height: 46px; border-bottom: 1px solid #aaa; display: flex; align-items: center; padding: 9px 0 0 4px; gap: 5px; white-space: nowrap; letter-spacing: .02px; }
.fields ul { list-style: none; padding-top: 1px; }
.fields li { height: 22px; display: flex; align-items: center; color: #111; letter-spacing: .02px; }
.fields li i { width: 16px; margin: 0 11px 0 11px; color: #82c08d; font-size: 9.500px; font-weight: 700; text-align: center; }
.fields li.b i { color: #4a8df5; }
.adds { margin-top: auto; height: 53px; border-bottom: 1px solid #b4b8bc; padding-left: 10px; }
.adds p, .add-data { display: flex; align-items: center; gap: 10px; height: 25px; color: #2a7af0; font-size: 12px; font-weight: 500; letter-spacing: -.1px; }
.add-data { height: 18px; flex: none; padding: 18px 0 0 7px; overflow: visible; }

/* right rail */
.rail { flex: 1; border-left: 1px solid #aeb2b6; padding: 7px 0 0 5px; display: flex; flex-direction: column; gap: 8px; overflow: hidden; }
.rail span { width: 68px; height: 64px; flex: none; border-radius: 4px; background: #e1edfc; color: #0b69e0; display: flex; flex-direction: column; align-items: center; justify-content: space-between; padding: 14px 0 9px; font-size: 12.250px; line-height: 15px; font-weight: 500; letter-spacing: -.02px; white-space: nowrap; }
.collapse { margin: auto 0 7px 35px; }

/* chart picker overlay */
.picker { position: absolute; left: 406px; top: 153px; width: 333px; height: 720px; background: #fff; border: 1px solid #ccc; box-shadow: 0 2px 4px rgba(0,0,0,.25); display: flex; overflow: hidden; }
.list { width: 317px; flex: none; padding: 18px 0 0 12px; border-right: 1px solid #e0e0e0; }
.list h5 { height: 24px; line-height: 18px; font-size: 13px; color: #33373b; letter-spacing: -.25px; }
.cards { height: 44px; display: flex; gap: 8px; }
.cards > * { width: 42px; height: 33px; flex: none; border-radius: 3px; box-shadow: inset 0 0 0 1px #dadce0; background: #fff; }
.ln path { fill: none; stroke: #2a7af0; stroke-width: 1.400; }
.thin path { stroke-width: 1.100; }
.candle path { stroke-width: 1.800; }
.ln .o { stroke: #ff7433; }
.ln .p { stroke: #a952e4; }
.ln .fb { fill: #2a7af0; stroke: none; }
.ln .fp { fill: #9b3df0; stroke: none; }
.ln .lilac { fill: #ebd6fb; stroke: none; }
.ln .sky { fill: #cfe0fb; stroke: none; }
.ln .peach { fill: #ffe0cc; stroke: none; }
.ln .violet { fill: #b99cf0; fill-opacity: .6; stroke: none; }
.dotted svg { fill: #3f86f2; }
.maps .bg { fill: #d3d6dc; }
.score { padding: 6px 0 0 6px; font-size: 6.500px; line-height: 7px; color: #555; }
.score b { display: block; font-weight: 400; font-size: 12px; line-height: 15px; color: #333; letter-spacing: .2px; }
.s2nd { padding-top: 5px; }
.picker-bar { width: 14px; padding: 3px 0 0 3px; }
.picker-bar i { height: 461px; }
.tip { position: absolute; left: 396px; top: 713px; width: 89px; height: 24px; border-radius: 3px; background: #545454; color: #fff; font-size: 12px; line-height: 24px; text-align: center; letter-spacing: .4px; }
```
